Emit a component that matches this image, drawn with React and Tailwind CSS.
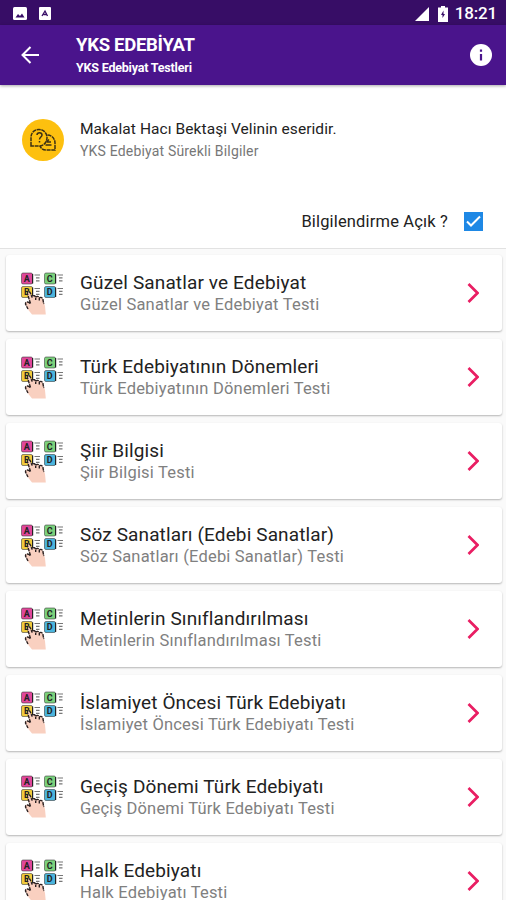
const topics = [
  "Güzel Sanatlar ve Edebiyat",
  "Türk Edebiyatının Dönemleri",
  "Şiir Bilgisi",
  "Söz Sanatları (Edebi Sanatlar)",
  "Metinlerin Sınıflandırılması",
  "İslamiyet Öncesi Türk Edebiyatı",
  "Geçiş Dönemi Türk Edebiyatı",
  "Halk Edebiyatı",
];

const options = [
  { letter: "A", x: 0, y: 0.5, color: "#e0479a" },
  { letter: "C", x: 23, y: 0.5, color: "#7bd17c" },
  { letter: "B", x: 0, y: 14, color: "#f0cb3c" },
  { letter: "D", x: 23, y: 14, color: "#4bb4dc" },
];

const TestIcon = () => (
  <svg className="h-[43px] w-[43px] shrink-0" viewBox="0 0 43 43">
    {options.map((o) => (
      <g key={o.letter}>
        <rect
          x={o.x + 0.5}
          y={o.y + 0.5}
          width="11"
          height="11"
          rx="1.5"
          fill={o.color}
          stroke="#333"
          strokeOpacity="0.55"
        />
        <path
          d={`M${o.x + 11.6} ${o.y + 1.5}v9.500`}
          stroke="#222"
          strokeWidth="1.2"
        />
        <text
          x={o.x + 5.8}
          y={o.y + 9}
          textAnchor="middle"
          fontSize="9"
          fontWeight="700"
          fill="#222"
        >
          {o.letter}
        </text>
        <path
          d={`M${o.x + 13.5} ${o.y + 2.5}h5.500m-4 2.800h3.500m-3.500 3h3.500`}
          stroke="#777"
          strokeWidth="1.2"
        />
      </g>
    ))}
    <path
      d="M6.500 22c-.5-2.500 2-3 3-.8l1.600 3.800c.3-2 3-2 3.600 0 .8-1.700 3-1.400 3.600.4 1.500-1.200 3.300-.2 3.600 1.600L24 34l.8 8.500H11L7 37.500 4.500 32c-.5-2.400 1.500-3 3-1.500l1.500 1.500z"
      fill="#f9d0c0"
    />
    <path
      d="M9.500 31.500 6.500 22c-.5-2.500 2-3 3-.8l1.600 4.300c.3-2.500 3-2.500 3.600 0v2.500m0-2.500c.8-1.700 3-1.400 3.600.4v2.500m0-2.500c1.500-1.200 3.300-.2 3.600 1.600L22.800 32M9 31.500c-2-2.500-4.800-1.500-4.500.5L7 37"
      fill="none"
      stroke="#2a2020"
      strokeWidth="1.4"
      strokeDasharray="3.500 .8"
    />
  </svg>
);

const QuestionIcon = () => (
  <div className="flex h-[42px] w-[42px] shrink-0 items-center justify-center rounded-full bg-[#fdc00f]">
    <svg
      className="h-[26px] w-[28px]"
      viewBox="0 0 28 26"
      fill="none"
      stroke="#3b3015"
      strokeWidth="1.5"
    >
      <path
        d="M2 19V10.500C2 5.500 5.500 2.500 10 2.500s8 3.500 8 8-3 8.500-8 8.500z"
        strokeDasharray="4 .7"
      />
      <path
        d="M18.500 8c4.500 0 7.500 4 7.500 8v7H17c-3 0-5-1.500-6-4"
        strokeDasharray="4 .7"
      />
      <path d="M8 8c0-3 5-3 5 0 0 2-2.500 2-2.500 4.500m0 1.500v1.500M20 12.500 17.500 15m0 0h4.500m-5.500 3h6" />
    </svg>
  </div>
);

const StatusBar = () => (
  <div className="flex h-[25px] items-center bg-[#370d66] pt-0.5 pr-[9px] pl-[13px] text-white">
    <svg className="h-[13px] w-[14px]" viewBox="0 0 14 13">
      <rect width="14" height="13" rx="1.5" fill="#fff" />
      <path d="M2.500 10.500 5 7l2 2 2-2.500 2.500 4z" fill="#370d66" />
    </svg>
    <svg className="ml-3 h-[13px] w-[12px]" viewBox="0 0 12 13">
      <rect width="12" height="13" rx="1" fill="#fff" />
      <path
        d="M3 9 6 4l2.500 5M4.500 7.500h3"
        fill="none"
        stroke="#370d66"
        strokeWidth="1.3"
      />
    </svg>
    <svg className="ml-auto h-[14px] w-[14px]" viewBox="0 0 14 14">
      <path d="M14 0v14H0z" fill="#fff" />
    </svg>
    <svg className="ml-[9px] h-[16px] w-[10px]" viewBox="0 0 10 16">
      <path d="M3 0h4v1.500h3V16H0V1.500h3z" fill="#fff" />
      <path d="M5.500 4.500 3 9h1.500v3L7 8H5.500z" fill="#370d66" />
    </svg>
    <span className="ml-[7px] text-[17px] leading-none font-medium tracking-[-0.2px]">
      18:21
    </span>
  </div>
);

const Header = () => (
  <header className="relative flex h-[60px] items-center bg-[#4a148c] pr-[14px] pl-[21px] text-white shadow-[0_1px_3px_rgba(0,0,0,0.35)]">
    <svg
      className="h-[18px] w-[18px]"
      viewBox="0 0 18 18"
      fill="none"
      stroke="#fff"
      strokeWidth="2"
    >
      <path d="M18 9H2M9.500 1 1.500 9l8 8" />
    </svg>
    <div className="ml-[37px]">
      <h1 className="text-[18.5px] leading-[25px] font-bold tracking-[-0.28px]">
        YKS EDEBİYAT
      </h1>
      <p className="text-[12.5px] leading-[20px] font-bold tracking-[-0.2px]">
        YKS Edebiyat Testleri
      </p>
    </div>
    <svg className="ml-auto h-[22px] w-[22px]" viewBox="0 0 22 22">
      <circle cx="11" cy="11" r="11" fill="#fff" />
      <path d="M11 5.500v2.200M11 10v6.500" stroke="#4a148c" strokeWidth="2.2" />
    </svg>
  </header>
);

const InfoPanel = () => (
  <section className="h-[164px] border-b border-[#e2e2e2] bg-white">
    <div className="flex items-center pt-[32.5px] pl-[21.5px]">
      <QuestionIcon />
      <div className="ml-[16.5px] whitespace-nowrap">
        <p className="text-[15.5px] leading-[22px] tracking-[0.07px] text-[#222]">
          Makalat Hacı Bektaşi Velinin eseridir.
        </p>
        <p className="text-[14px] leading-[22px] tracking-[0.18px] text-[#777]">
          YKS Edebiyat Sürekli Bilgiler
        </p>
      </div>
    </div>
    <div className="mt-[50px] flex items-center justify-end pr-[23px]">
      <span className="text-[16.5px] leading-[20px] tracking-[0.16px] text-[#222]">
        Bilgilendirme Açık ?
      </span>
      <svg className="ml-4 h-[19px] w-[19px]" viewBox="0 0 19 19">
        <rect width="19" height="19" fill="#1e88e5" />
        <path
          d="m3 9.500 4 4 9-9"
          fill="none"
          stroke="#fff"
          strokeWidth="2"
        />
      </svg>
    </div>
  </section>
);

const TopicCard = ({ title }) => (
  <button className="flex h-[76px] w-full shrink-0 items-center rounded-[3px] bg-white pr-[23px] pl-[15px] text-left shadow-[0_1px_2px_rgba(0,0,0,0.28)]">
    <TestIcon />
    <div className="ml-4 pt-0.5 whitespace-nowrap">
      <p className="text-[19px] leading-[22px] tracking-[0.13px] text-[#222]">
        {title}
      </p>
      <p className="text-[16.5px] leading-[22px] tracking-[0.2px] text-[#808080]">
        {title} Testi
      </p>
    </div>
    <svg
      className="ml-auto h-[20px] w-[12px]"
      viewBox="0 0 12 20"
      fill="none"
      stroke="#e91e63"
      strokeWidth="2.7"
    >
      <path d="m1.500 1 9 9-9 9" />
    </svg>
  </button>
);

const App = () => {
  return (
    <div className="h-[900px] w-[506px] overflow-hidden bg-[#fafafa] font-[Roboto,sans-serif]">
      <StatusBar />
      <Header />
      <InfoPanel />
      <main className="flex flex-col gap-[7.9px] pt-[6.4px] pr-1 pl-1.5">
        {topics.map((topic) => (
          <TopicCard key={topic} title={topic} />
        ))}
      </main>
    </div>
  );
};

export default App;
